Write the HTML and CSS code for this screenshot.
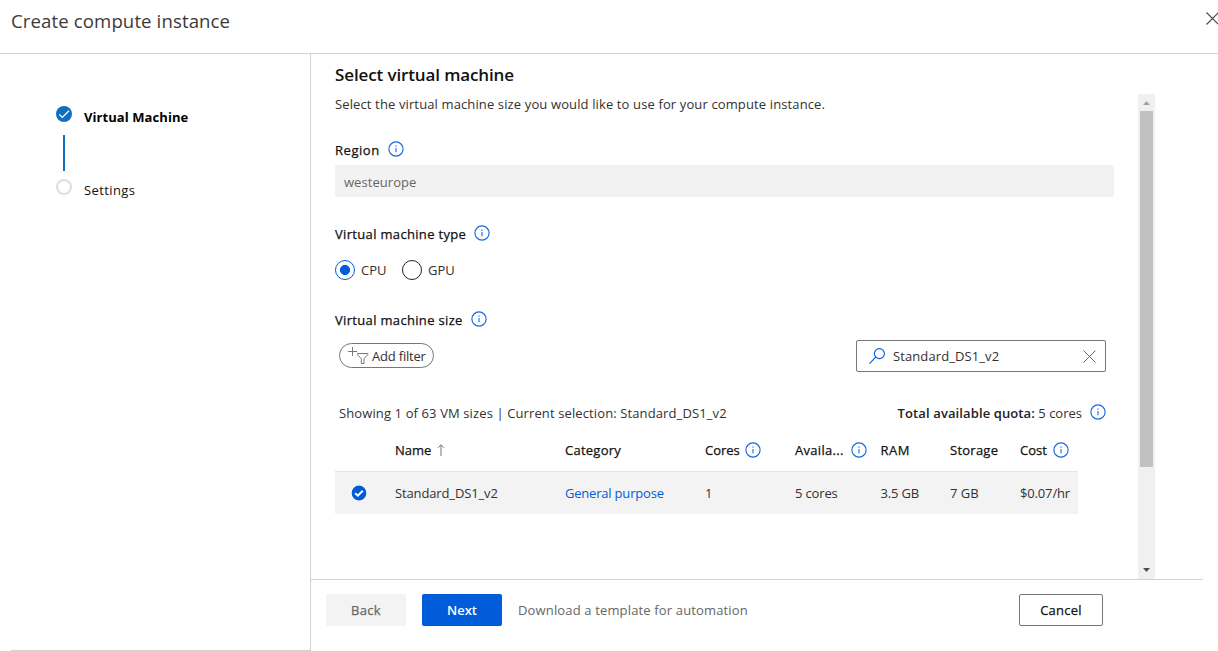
FILE: index.html
```html
<!DOCTYPE html>
<html lang="en">
<head>
<meta charset="utf-8">
<title>Create compute instance</title>
<link rel="stylesheet" href="styles.css">
</head>
<body>
<svg class="defs" width="0" height="0" aria-hidden="true">
  <symbol id="info" viewBox="0 0 16 16"><circle cx="8" cy="8" r="7.1" fill="none" stroke="currentColor" stroke-width="1.15"/><path d="M8 6.9v4.4" stroke="currentColor" stroke-width="1.1"/><path d="M8 4.6v1.2" stroke="currentColor" stroke-width="1.1"/></symbol>
</svg>
<div class="dialog">
  <header class="header">
    <h1 class="dialog-title">Create compute instance</h1>
    <svg class="close" viewBox="0 0 13 13"><path d="M.5 .5l12 12M12.5 .5l-12 12" stroke="#444" stroke-width="1.1"/></svg>
  </header>
  <div class="columns">
    <nav class="steps">
      <div class="step step-current">
        <svg class="step-icon" viewBox="0 0 16 16"><circle cx="8" cy="8" r="8" fill="#106ebe"/><path d="M3.3 8.4l3 3L13 4.7" fill="none" stroke="#fff" stroke-width="1.3"/></svg>
        <span class="step-name">Virtual Machine</span>
      </div>
      <div class="step-line"></div>
      <div class="step">
        <span class="step-ring"></span>
        <span class="step-name">Settings</span>
      </div>
    </nav>
    <main class="main">
      <h2 class="title">Select virtual machine</h2>
      <div class="scroller">
        <div class="form">
          <p class="intro">Select the virtual machine size you would like to use for your compute instance.</p>
          <div class="label label-region"><span>Region</span><svg class="info"><use href="#info"/></svg></div>
          <div class="region">westeurope</div>
          <div class="label label-type"><span>Virtual machine type</span><svg class="info"><use href="#info"/></svg></div>
          <div class="radios">
            <span class="radio radio-on"></span><span class="radio-name">CPU</span>
            <span class="radio"></span><span class="radio-name">GPU</span>
          </div>
          <div class="label label-size"><span>Virtual machine size</span><svg class="info"><use href="#info"/></svg></div>
          <div class="tools">
            <div class="filter">
              <svg class="filter-icon" viewBox="0 0 21 18"><path d="M4.500 0v9M0 4.500h9" stroke="#777" fill="none"/><path d="M9.500 6.500h10.3v1.2l-3.800 4v4.800h-2.700v-4.800l-3.800-4z" stroke="#777" fill="none"/></svg>
              <span class="filter-text">Add filter</span>
            </div>
            <div class="search">
              <svg class="search-icon" viewBox="0 0 16 16"><circle cx="10.4" cy="5.6" r="5" fill="none" stroke="#015cda" stroke-width="1.1"/><path d="M6.8 9.2L.4 15.6" stroke="#015cda" stroke-width="1.1"/></svg>
              <span class="search-text">Standard_DS1_v2</span>
              <svg class="clear" viewBox="0 0 13 13"><path d="M.5 .5l12 12M12.5 .5l-12 12" stroke="#666" stroke-width="1"/></svg>
            </div>
          </div>
          <div class="summary">
            <span class="showing">Showing 1 of 63 VM sizes | Current selection: Standard_DS1_v2</span>
            <span class="quota"><b>Total available quota:</b> <span class="quota-value">5 cores</span></span>
            <svg class="info"><use href="#info"/></svg>
          </div>
          <div class="table">
            <div class="row head">
              <span></span>
              <span class="cell h-name"><span>Name</span><svg class="sort" viewBox="0 0 8 12"><path d="M4 12V.8M1 3.8l3-3 3 3" fill="none" stroke="#777"/></svg></span>
              <span class="cell h-category">Category</span>
              <span class="cell h-cores"><span>Cores</span><svg class="info"><use href="#info"/></svg></span>
              <span class="cell h-avail"><span>Availa...</span><svg class="info"><use href="#info"/></svg></span>
              <span class="cell h-ram">RAM</span>
              <span class="cell h-storage">Storage</span>
              <span class="cell h-cost"><span>Cost</span><svg class="info"><use href="#info"/></svg></span>
            </div>
            <div class="row data">
              <svg class="row-check" viewBox="0 0 16 16"><circle cx="8" cy="8" r="8" fill="#fff"/><circle cx="8" cy="8" r="7.4" fill="#015cda"/><path d="M4.2 8.2l2.6 2.5 5-5" fill="none" stroke="#fff" stroke-width="2"/></svg>
              <span class="d-name">Standard_DS1_v2</span>
              <span class="link">General purpose</span>
              <span>1</span>
              <span class="d-avail">5 cores</span>
              <span class="d-ram">3.5 GB</span>
              <span class="d-storage">7 GB</span>
              <span class="d-cost">$0.07/hr</span>
            </div>
          </div>
        </div>
        <div class="scrollbar">
          <svg class="arrow" viewBox="0 0 17 17"><path d="M5 11l3.500-4 3.500 4z" fill="#a3a3a3"/></svg>
          <div class="thumb"></div>
          <svg class="arrow" viewBox="0 0 17 17"><path d="M5 6h7L8.500 10z" fill="#505050"/></svg>
        </div>
      </div>
      <footer class="footer">
        <div class="button back">Back</div>
        <div class="button next">Next</div>
        <span class="template">Download a template for automation</span>
        <div class="button cancel">Cancel</div>
      </footer>
    </main>
  </div>
</div>
</body>
</html>
```
FILE: styles.css
```css
* { box-sizing: border-box; }
body {
  margin: 0;
  background: #fff;
  color: #323130;
  font-family: "Open Sans", "Noto Sans", sans-serif;
  font-size: 13px;
  line-height: 20px;
  white-space: nowrap;
}
h1, h2, p { margin: 0; }
svg { display: block; flex: none; }
.defs { position: absolute; }
.dialog { width: 1218px; height: 651px; overflow: hidden; display: flex; flex-direction: column; }
.header { height: 54px; flex: none; border-bottom: 1px solid #d2d2d2; padding: 6px 0 0 11px; display: flex; justify-content: space-between; }
.dialog-title { font-size: 18.6px; font-weight: 400; line-height: 30px; letter-spacing: .11px; color: #3b3a39; }
.close { width: 13px; height: 13px; margin: 6px -1px 0 0; }
.columns { display: flex; height: 597px; }

.steps { width: 311px; flex: none; border-right: 1px solid #d2d2d2; padding: 52px 0 0 56px; background: linear-gradient(#d2d2d2, #d2d2d2) 11px 100% / 300px 1px no-repeat; }
.step { display: flex; height: 22px; gap: 12px; color: #111; letter-spacing: .4px; }
.step-icon, .step-ring { width: 16px; height: 16px; }
.step-ring { border: 2px solid #dedede; border-radius: 50%; }
.step-name { line-height: 22px; }
.step-current .step-name { font-weight: 700; letter-spacing: .07px; color: #000; }
.step-line { width: 2px; height: 36px; margin: 7px 0 8px 7px; background: #106ebe; }

.main { flex: 1; display: flex; flex-direction: column; }
.title { height: 40px; padding: 9px 0 0 24px; font-size: 17px; font-weight: 600; line-height: 24px; letter-spacing: -.12px; color: #111; }
.scroller { height: 485px; display: flex; }
.form { width: 827px; padding-left: 24px; }
.intro { letter-spacing: .125px; }
.label { display: flex; gap: 8px; height: 20px; color: #111; letter-spacing: .33px; -webkit-text-stroke: .25px; }
.info { width: 16px; height: 16px; color: #1668e0; }
.label .info { margin-top: .5px; }
.label-region { margin-top: 26px; letter-spacing: .55px; }
.region { width: 779px; height: 32px; margin-top: 5px; padding-left: 9px; background: #f3f2f2; border-radius: 2px; line-height: 34px; color: #666; letter-spacing: .05px; }
.label-type { margin-top: 27px; }
.radios { display: flex; margin-top: 16px; height: 20px; }
.radio { width: 20px; height: 20px; border: 1px solid #222; border-radius: 50%; margin-right: 6px; }
.radio-on { border-color: #015cda; background: radial-gradient(circle, #015cda 4.7px, transparent 5.3px); }
.radio-name { width: 41px; }
.label-size { margin-top: 30px; }
.tools { display: flex; justify-content: space-between; margin: 10px 32px 0 4px; height: 32px; }
.filter { display: flex; width: 95px; height: 25px; margin-top: 3px; border: 1px solid #777; border-radius: 13px; padding-left: 8px; gap: 3px; line-height: 25px; }
.filter-text { letter-spacing: -.2px; }
.filter-icon { width: 21px; height: 18px; margin-top: 3px; }
.search { display: flex; width: 250px; border: 1px solid #777; border-radius: 2px; padding: 0 9px 0 12px; line-height: 31px; }
.search-icon { width: 16px; height: 16px; margin: 7px 8px 0 0; }
.search-text { flex: 1; letter-spacing: .1px; }
.clear { width: 13px; height: 13px; margin-top: 9px; }
.summary { display: flex; margin: 31px 32px 0 4px; height: 20px; }
.showing { letter-spacing: .115px; }
.quota { margin-left: auto; }
.quota b { font-weight: 600; letter-spacing: .11px; color: #222; }
.summary .info { margin: .5px 0 0 8px; }
.table { width: 743px; margin-top: 7px; }
.row { display: grid; grid-template-columns: 60px 170px 140px 90px 85.5px 69.5px 70px 58px; }
.head { height: 41px; padding-top: 10px; color: #111; -webkit-text-stroke: .25px; }
.cell { display: flex; gap: 6px; }
.h-category, .h-storage { letter-spacing: .25px; }
.h-cores { gap: 5px; }
.h-avail { letter-spacing: .3px; gap: 7.5px; }
.h-ram { letter-spacing: .5px; }
.sort { width: 8px; height: 12px; margin-top: 4px; }
.head .info { margin-top: 1.5px; }
.data { height: 43px; border-top: 1px solid #e4e4e4; background: #f3f3f3; line-height: 43px; }
.row-check { width: 16px; height: 16px; margin: 13px 0 0 16px; }
.d-name { letter-spacing: -.13px; }
.link { color: #015cda; letter-spacing: -.2px; }
.d-avail, .d-ram, .d-cost { letter-spacing: -.15px; }
.scrollbar { width: 17px; background: #f0f0f0; display: flex; flex-direction: column; }
.arrow { width: 17px; height: 17px; }
.thumb { width: 13px; height: 356px; margin: 0 2px auto; background: #c1c1c1; }
.footer { height: 72px; display: flex; padding: 14px 0 0 15px; width: 892px; border-top: 1px solid #d2d2d2; }
.button { height: 32px; width: 80px; border-radius: 2px; text-align: center; line-height: 32px; }
.back { background: #f3f3f3; color: #666; -webkit-text-stroke: .25px; letter-spacing: .3px; }
.next { background: #015cda; color: #fff; margin: 0 16px; font-weight: 600; }
.template { line-height: 32px; color: #666; letter-spacing: .15px; }
.cancel { width: 84px; margin: 0 100px 0 auto; border: 1px solid #777; line-height: 31px; -webkit-text-stroke: .25px; letter-spacing: .25px; color: #111; }
```
